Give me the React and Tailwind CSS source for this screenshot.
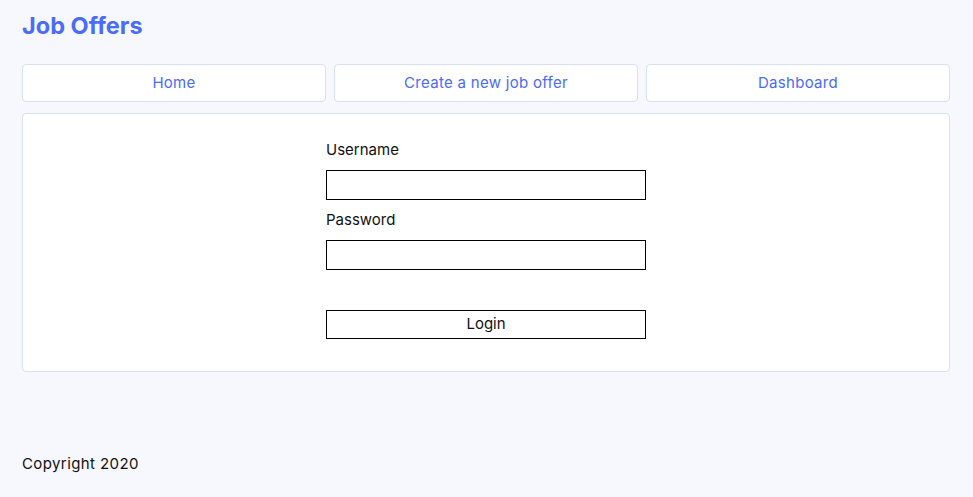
import { useState } from 'react'

function NavLink({ label }) {
    return (
        <a href="#" className="flex-1 h-[38px] flex items-center justify-center bg-white border border-[#d9e0f3] rounded-[4px] text-[#4a6cf7] text-[15px] tracking-[0.3px]">
            {label}
        </a>
    )
}

function LoginForm() {
    const [formData, setFormData] = useState({ username: "", password: "" })

    function handleChange(event) {
        const { name, value } = event.target
        setFormData(prev => ({ ...prev, [name]: value }))
    }

    return (
        <form onSubmit={e => e.preventDefault()} className="w-[320px] mx-auto flex flex-col">
            <label className="text-[15px] leading-[24px] text-[#111]">Username</label>
            <input
                type="text" name="username" value={formData.username} onChange={handleChange}
                className="mt-2 h-[30px] border border-black bg-white px-1 outline-none"
            />
            <label className="mt-2 text-[15px] leading-[24px] text-[#111]">Password</label>
            <input
                type="password" name="password" value={formData.password} onChange={handleChange}
                className="mt-2 h-[30px] border border-black bg-white px-1 outline-none"
            />
            <button type="submit" className="mt-10 h-[29px] border border-black bg-white text-[15px] text-[#111] cursor-pointer">
                Login
            </button>
        </form>
    )
}

export default function App() {
    return (
        <div className="min-h-[497px] bg-[#f7f8fe] pl-[22px] pr-[23px] pt-[12px] font-['Inter','Lato',sans-serif]">
            <h1 className="text-[23.5px] leading-[28px] font-bold text-[#4a6cf7]">Job Offers</h1>

            <nav className="mt-6 flex gap-2">
                <NavLink label="Home" />
                <NavLink label="Create a new job offer" />
                <NavLink label="Dashboard" />
            </nav>

            <main className="mt-[11px] bg-white border border-[#d9e0f3] rounded-[4px] pt-[24px] pb-[32px]">
                <LoginForm />
            </main>

            <footer className="mt-[80px] text-[15px] leading-[24px] tracking-[0.4px] text-[#111]">Copyright 2020</footer>
        </div>
    )
}
